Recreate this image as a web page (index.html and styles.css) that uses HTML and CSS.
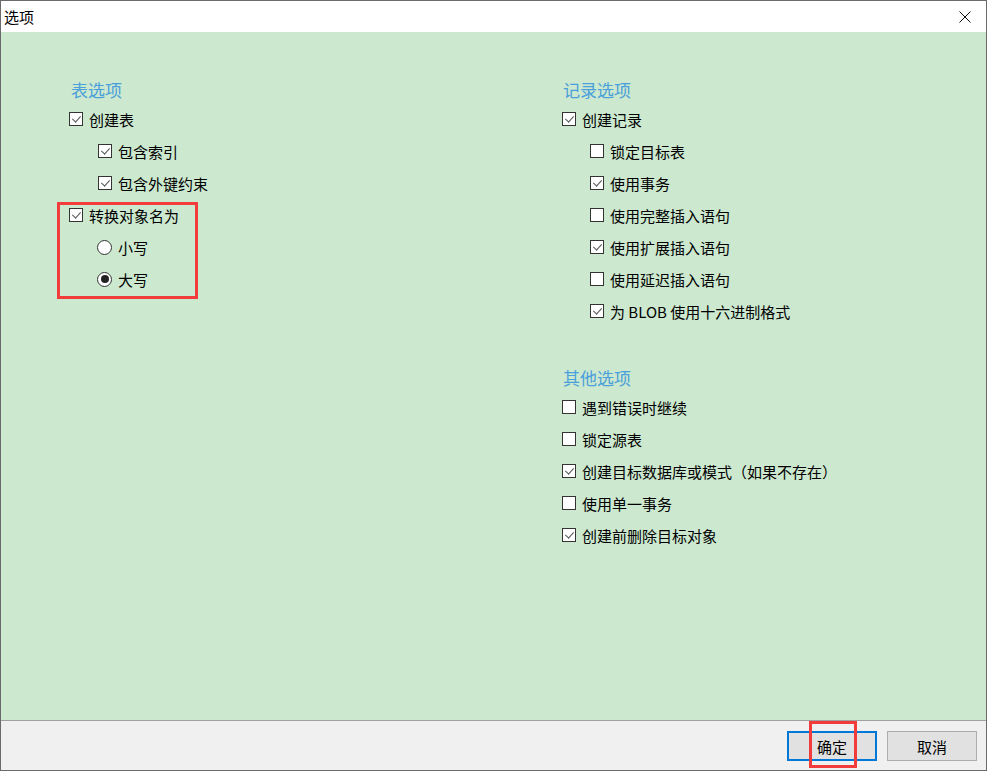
FILE: index.html
```html
<!DOCTYPE html>
<html lang="zh-CN">
<head>
    <meta charset="UTF-8">
    <title>选项</title>
    <link rel="stylesheet" href="styles.css">
</head>
<body>
    <div class="dialog">
        <div class="title-bar">
            <span class="title">选项</span>
            <span class="close">
                <svg width="12" height="12" viewBox="0 0 12 12"><path d="M0.5 0.5 L11.5 11.5 M11.5 0.5 L0.5 11.5" stroke="#111" stroke-width="1" fill="none"/></svg>
            </span>
        </div>

        <div class="content">
            <div class="column left">
                <div class="section-title">表选项</div>
                <div class="row"><span class="check on"></span>创建表</div>
                <div class="row sub"><span class="check on"></span>包含索引</div>
                <div class="row sub"><span class="check on"></span>包含外键约束</div>
                <div class="group marked">
                    <div class="row"><span class="check on"></span>转换对象名为</div>
                    <div class="row sub"><span class="radio"></span>小写</div>
                    <div class="row sub"><span class="radio on"></span>大写</div>
                </div>
            </div>

            <div class="column right">
                <div class="section-title">记录选项</div>
                <div class="row"><span class="check on"></span>创建记录</div>
                <div class="row sub"><span class="check"></span>锁定目标表</div>
                <div class="row sub"><span class="check on"></span>使用事务</div>
                <div class="row sub"><span class="check"></span>使用完整插入语句</div>
                <div class="row sub"><span class="check on"></span>使用扩展插入语句</div>
                <div class="row sub"><span class="check"></span>使用延迟插入语句</div>
                <div class="row sub"><span class="check on"></span>为 BLOB 使用十六进制格式</div>

                <div class="section-title spaced">其他选项</div>
                <div class="row"><span class="check"></span>遇到错误时继续</div>
                <div class="row"><span class="check"></span>锁定源表</div>
                <div class="row"><span class="check on"></span>创建目标数据库或模式（如果不存在）</div>
                <div class="row"><span class="check"></span>使用单一事务</div>
                <div class="row"><span class="check on"></span>创建前删除目标对象</div>
            </div>
        </div>

        <div class="footer">
            <button class="btn primary marked-btn">确定</button>
            <button class="btn">取消</button>
        </div>
    </div>
</body>
</html>
```

FILE: styles.css
```css
:root {
    --bg-green: #cce8cf;
    --heading-blue: #4aa0da;
    --mark-red: #f23b3b;
}

*,
*::before,
*::after {
    box-sizing: border-box;
}

body {
    margin: 0;
    font-family: "Noto Sans CJK SC", sans-serif;
    font-size: 15px;
    color: #000;
    background: #fff;
}

.dialog {
    width: 987px;
    height: 771px;
    border: 1px solid #6a6a6a;
    display: flex;
    flex-direction: column;
}

.title-bar {
    height: 31px;
    background: #fff;
    display: flex;
    align-items: center;
    justify-content: space-between;
    padding: 0 15px 0 3px;
}

.title {
    font-size: 15px;
    line-height: 1;
}

.close {
    display: flex;
    margin-top: 1px;
}

.content {
    flex: 1;
    background: var(--bg-green);
    display: flex;
    padding: 43px 0 0 68px;
}

.column.left {
    width: 493px;
}

.section-title {
    height: 28px;
    display: flex;
    align-items: center;
    padding-left: 2px;
    font-size: 17px;
    color: var(--heading-blue);
}

.right .section-title {
    padding-left: 1px;
}

.section-title.spaced {
    margin-top: 36px;
}

.row {
    height: 32px;
    display: flex;
    align-items: center;
    gap: 6px;
    white-space: nowrap;
}

.row.sub {
    padding-left: 28px;
}

.left .row.sub {
    padding-left: 29px;
}

.check {
    width: 14px;
    height: 14px;
    border: 1px solid #333;
    background: #fff;
    display: inline-block;
    position: relative;
    flex-shrink: 0;
}

.check.on::after {
    content: "";
    position: absolute;
    left: 4px;
    top: 1px;
    width: 5px;
    height: 8px;
    border-right: 1.3px solid #555;
    border-bottom: 1.3px solid #555;
    transform: rotate(42deg);
}

.radio {
    width: 15px;
    height: 15px;
    border: 1px solid #333;
    border-radius: 50%;
    background: #fff;
    display: inline-flex;
    align-items: center;
    justify-content: center;
    flex-shrink: 0;
    margin-left: -1px;
}

.radio.on::after {
    content: "";
    width: 8px;
    height: 8px;
    border-radius: 50%;
    background: #222;
}

/* red annotation boxes */
.group.marked {
    position: relative;
}

.group.marked::after {
    content: "";
    position: absolute;
    left: -12px;
    top: 3px;
    width: 141px;
    height: 97px;
    border: 3px solid var(--mark-red);
    pointer-events: none;
}

.footer {
    height: 50px;
    border-top: 1px solid #a0a0a0;
    background: #f0f0f0;
    display: flex;
    justify-content: flex-end;
    align-items: flex-start;
    gap: 10px;
    padding: 10px 9px 0 0;
}

.btn {
    width: 90px;
    height: 30px;
    border: 1px solid #adadad;
    background: #e1e1e1;
    font-family: "Noto Sans CJK SC", sans-serif;
    font-size: 15px;
    color: #000;
    padding: 0;
}

.btn.primary {
    border: 2px solid #0078d7;
}

.marked-btn {
    position: relative;
}

.marked-btn::after {
    content: "";
    position: absolute;
    left: 20px;
    top: -12px;
    width: 48px;
    height: 47px;
    border: 3px solid var(--mark-red);
    pointer-events: none;
}
```
